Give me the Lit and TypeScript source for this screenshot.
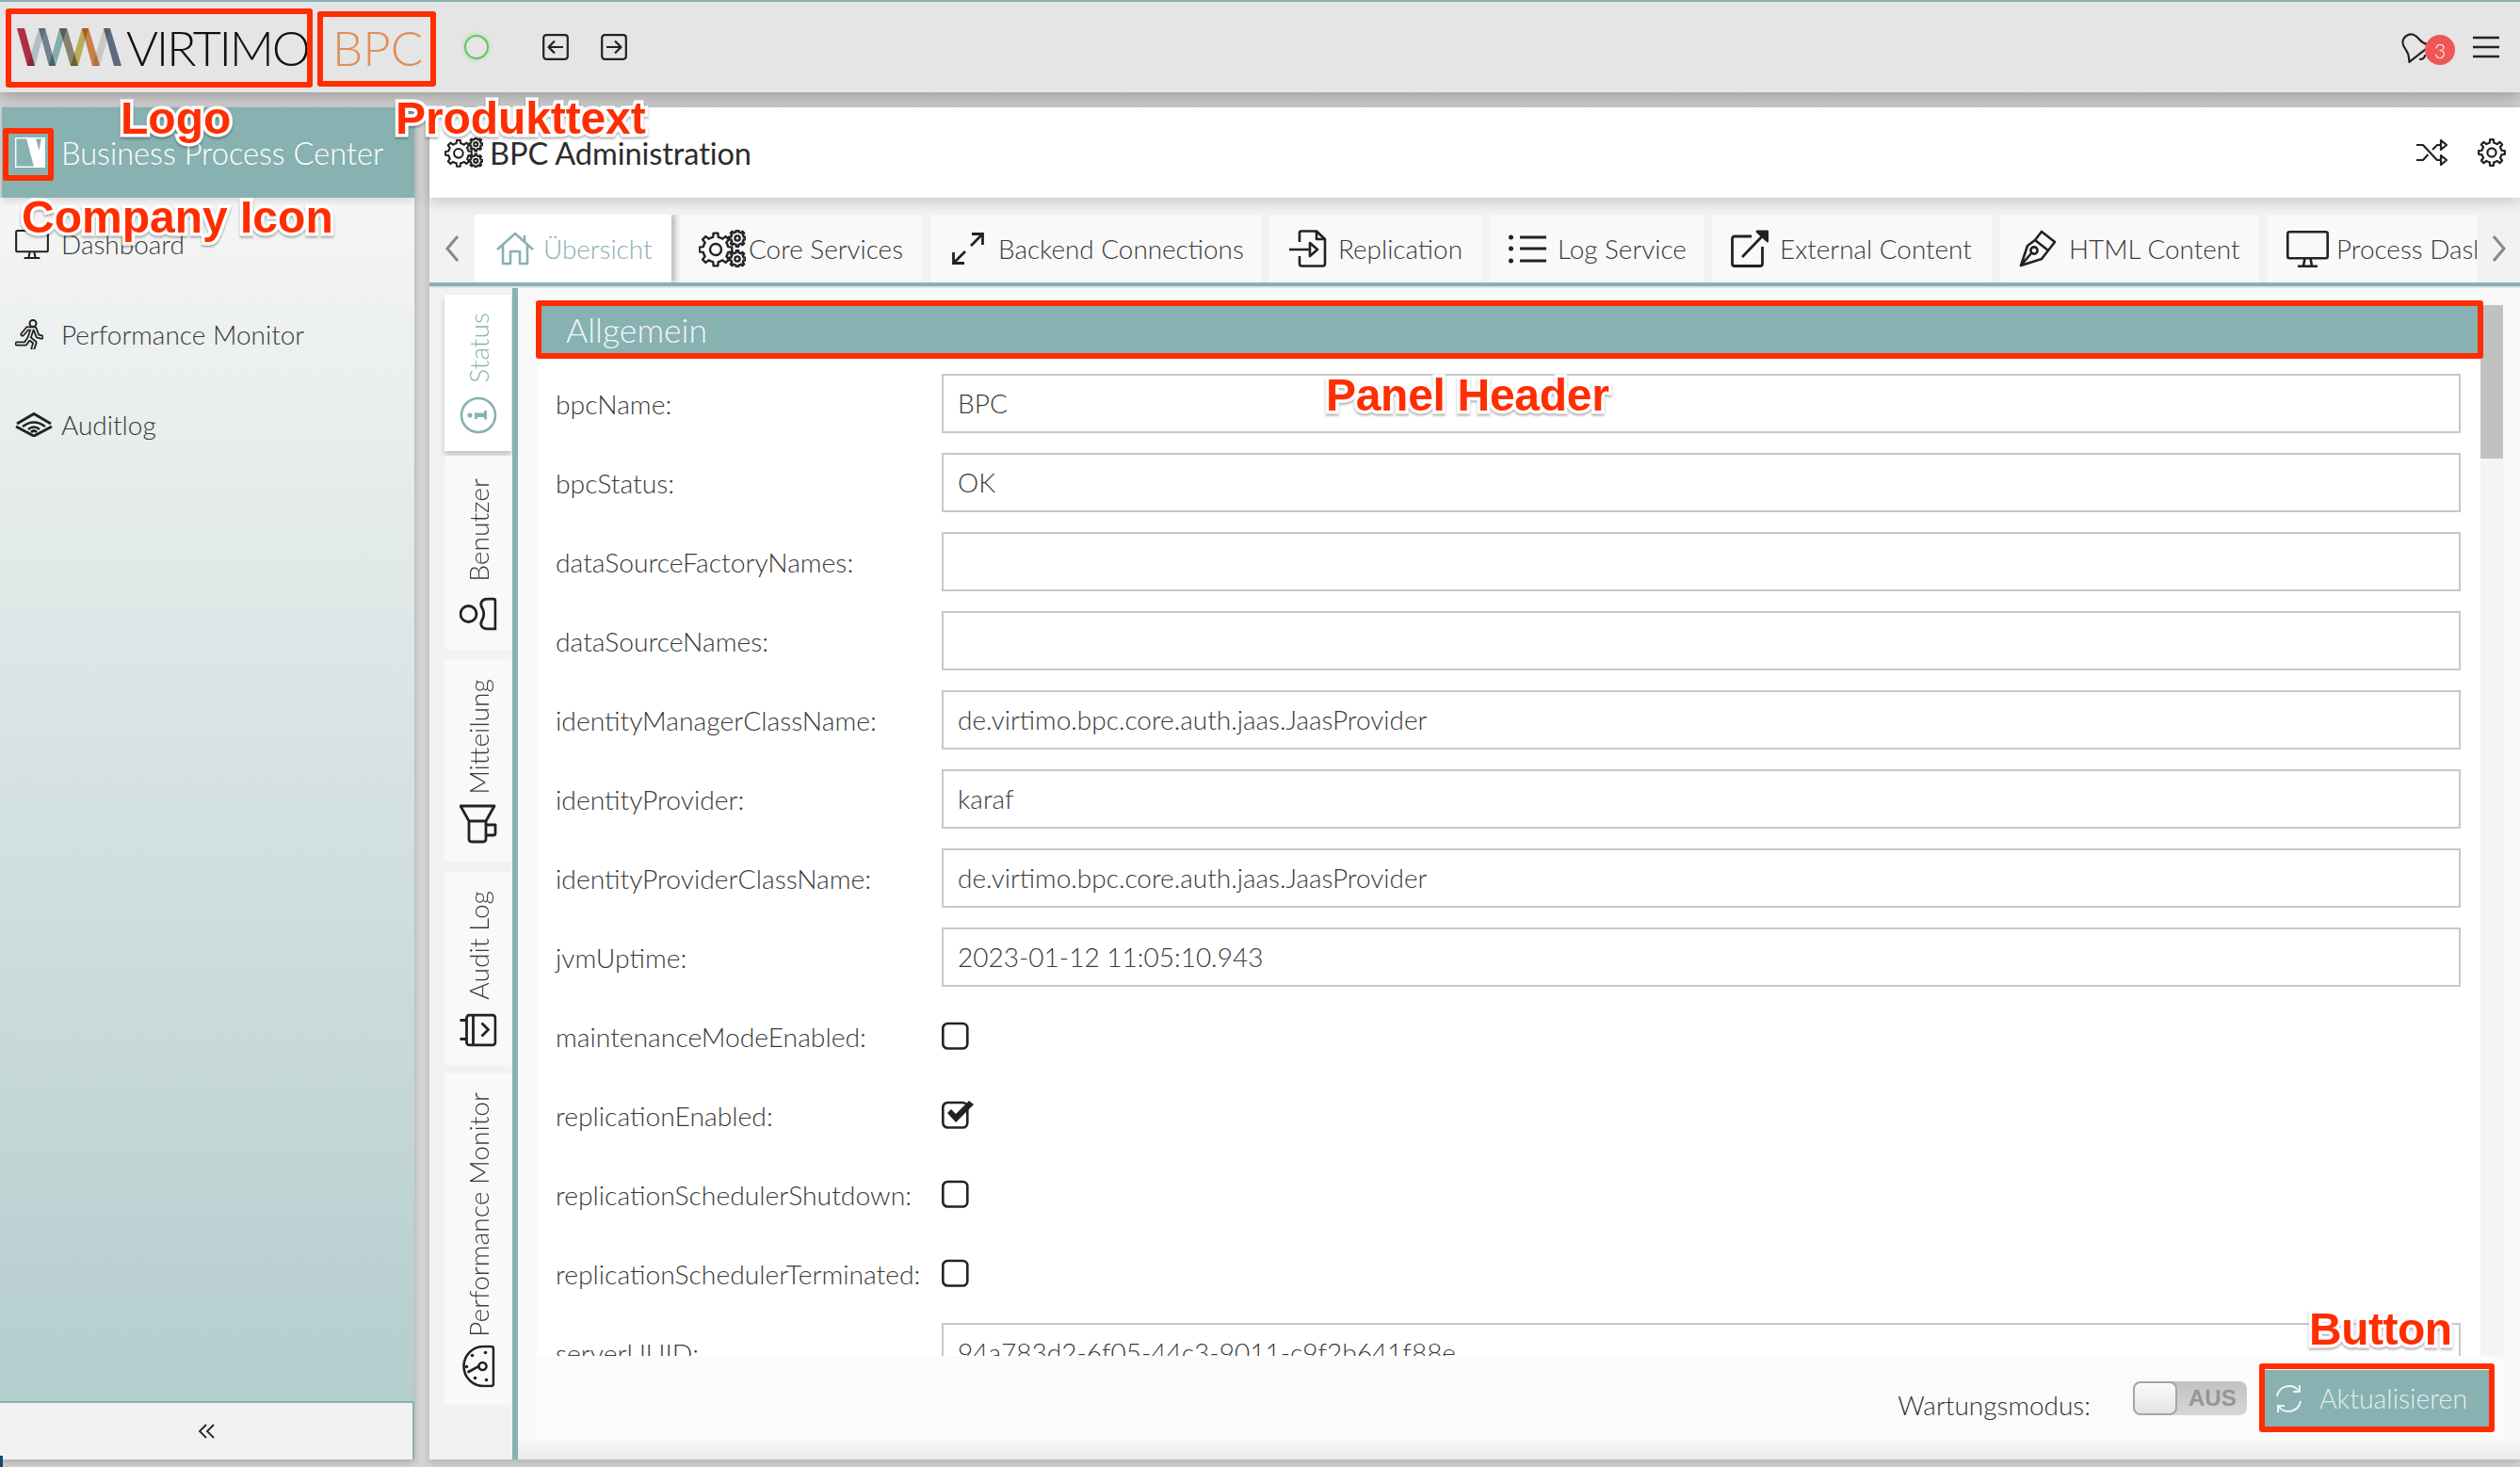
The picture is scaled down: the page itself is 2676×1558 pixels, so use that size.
import { LitElement, html, css, svg } from "lit";
import { customElement } from "lit/decorators.js";

const gearD = (cx: number, cy: number, ro: number, ri: number, n: number) => {
  let d = "";
  const step = (Math.PI * 2) / n;
  for (let i = 0; i < n; i++) {
    const a = i * step;
    const pts = [
      [ri, a - step * 0.5],
      [ri, a - step * 0.27],
      [ro, a - step * 0.17],
      [ro, a + step * 0.17],
      [ri, a + step * 0.27],
    ];
    pts.forEach(([r, t], j) => {
      d += `${i === 0 && j === 0 ? "M" : "L"}${(cx + r * Math.cos(t)).toFixed(2)} ${(cy + r * Math.sin(t)).toFixed(2)} `;
    });
  }
  return d + "Z";
};

const triGears = (w: number, h: number, sw: number) => html`<svg class="ic" width=${w} height=${h} viewBox="0 0 50 40" fill="none" stroke="#222" stroke-width=${sw} stroke-linejoin="round">
  <path d=${gearD(18, 21, 17.5, 13.5, 8)} /><circle cx="18" cy="21" r="6" />
  <path d=${gearD(41, 9, 9, 6.8, 8)} /><circle cx="41" cy="9" r="2.6" />
  <path d=${gearD(41, 31, 9, 6.8, 8)} /><circle cx="41" cy="31" r="2.6" />
</svg>`;

const monitor = (w: number, h: number) => html`<svg class="ic" width=${w} height=${h} viewBox="0 0 45 39" fill="none" stroke="#222" stroke-width="2.6" stroke-linejoin="round">
  <rect x="1.3" y="1.3" width="42.4" height="28" rx="2" />
  <path d="M19.5 29.5 L18 37.5 M25.5 29.5 L27 37.5 M12 37.7 H33" />
</svg>`;

const tabIcons: Record<string, unknown> = {
  home: html`<svg class="ic" width="40" height="36" viewBox="0 0 40 36" fill="none" stroke="#88b1b2" stroke-width="2.6" stroke-linejoin="round">
    <path d="M1 19 L20 2 L39 19 M7 14 V34 H15 V21 H25 V34 H33 V14 M30 4 V10" /></svg>`,
  core: triGears(50, 40, 2.4),
  backend: html`<svg class="ic" width="36" height="36" viewBox="0 0 36 36" fill="none" stroke="#222" stroke-width="2.8">
    <path d="M3 33 L15 21 M21 15 L33 3 M22 2.5 H33.5 V14 M2.5 22 V33.5 H14" /></svg>`,
  replication: html`<svg class="ic" width="40" height="40" viewBox="0 0 40 40" fill="none" stroke="#222" stroke-width="2.6" stroke-linejoin="round">
    <path d="M11 13 V3 Q11 1.5 13 1.5 H29 L38 10 V36 Q38 38.5 36 38.5 H13 Q11 38.5 11 36 V28 M29 1.5 V10 H38 M0 21 H22 M22 14 L30 21 L22 28 Z" /></svg>`,
  log: html`<svg class="ic" width="40" height="34" viewBox="0 0 40 34" fill="none" stroke="#222" stroke-width="2.8">
    <path d="M12 5 H40 M12 17 H40 M12 30 H40" /><g fill="#222" stroke="none"><circle cx="2.5" cy="5" r="2.5" /><circle cx="2.5" cy="17" r="2.5" /><circle cx="2.5" cy="30" r="2.5" /></g></svg>`,
  external: html`<svg class="ic" width="40" height="40" viewBox="0 0 40 40" fill="none" stroke="#222" stroke-width="2.8" stroke-linejoin="round">
    <path d="M22 7 H4 Q1.5 7 1.5 9.5 V36 Q1.5 38.5 4 38.5 H31 Q33.5 38.5 33.5 36 V18 M12 29 L37 3" /><path d="M28 2 H39 V12 Z" fill="#222" /></svg>`,
  html: html`<svg class="ic" width="40" height="40" viewBox="0 0 40 40" fill="none" stroke="#222" stroke-width="2.6" stroke-linejoin="round">
    <path d="M24 2 L38 13 L31 22 L17 11 Z M17 11 L9 17 L2 38 L24 31 L31 22 M2 38 L13 25" /><circle cx="16" cy="22" r="3.6" /></svg>`,
  process: monitor(45, 39),
};

const tabs = [
  { id: "home", label: "Übersicht", w: 209, pad: 23, gap: 10 },
  { id: "core", label: "Core Services", w: 257, pad: 20, gap: 3 },
  { id: "backend", label: "Backend Connections", w: 351, pad: 22, gap: 14 },
  { id: "replication", label: "Replication", w: 225, pad: 21, gap: 12 },
  { id: "log", label: "Log Service", w: 227, pad: 20, gap: 12 },
  { id: "external", label: "External Content", w: 297, pad: 20, gap: 12 },
  { id: "html", label: "HTML Content", w: 275, pad: 20, gap: 13 },
  { id: "process", label: "Process Dashboard", w: 222, pad: 20, gap: 8 },
];

const vIcons: Record<string, unknown> = {
  info: html`<svg width="40" height="40" viewBox="0 0 40 40" fill="none" stroke="#88b1b2" stroke-width="2.6">
    <circle cx="20" cy="20" r="18" /><g stroke="none" fill="#88b1b2"><circle cx="20" cy="11" r="2.6" /><path d="M16 16 H22.5 V26 H25 V29 H15.5 V26 H18 V19 H16 Z" /></g></svg>`,
  user: html`<svg width="35" height="40" viewBox="0 0 35 40" fill="none" stroke="#222" stroke-width="2.8">
    <circle cx="17.5" cy="10" r="8.5" /><path d="M1.5 38.5 V31 C1.5 24 6 22 10 24 C15 27 20 27 25 24 C29 22 33.5 24 33.5 31 V36 Q33.5 38.5 31 38.5 Z" /></svg>`,
  mega: html`<svg width="44" height="40" viewBox="0 0 44 40" fill="none" stroke="#222" stroke-width="2.8" stroke-linejoin="round">
    <g transform="rotate(90 22 20) translate(2 -1)"><path d="M1 2 H37 L28 18 V37 Q28 40 25 40 H13 Q10 40 10 37 V18 Z M10 18 H28 M28 22 H38 V31 Q38 33 36 33 H28" /></g></svg>`,
  term: html`<svg width="35" height="40" viewBox="0 0 35 40" fill="none" stroke="#222" stroke-width="2.8" stroke-linejoin="round">
    <rect x="1.5" y="8" width="32" height="30.5" rx="3" /><path d="M1.5 15 H33.5 M8 8 V1 M28 8 V1 M11 24 L18 31 L25 24" /></svg>`,
  gauge: html`<svg width="45" height="36" viewBox="0 0 45 36" fill="none" stroke="#222" stroke-width="2.6" stroke-linejoin="round">
    <path d="M4 34.5 Q1.5 34.5 1.5 32 V24 A21 21 0 0 1 43.5 24 V32 Q43.5 34.5 41 34.5 Z" /><circle cx="22.5" cy="23" r="4" /><path d="M22.5 19 L16 7" />
    <g fill="#222" stroke="none"><circle cx="8" cy="27" r="1.8" /><circle cx="10" cy="15" r="1.8" /><circle cx="34" cy="12" r="1.8" /><circle cx="37" cy="26" r="1.8" /><circle cx="22" cy="6" r="1.8" /></g></svg>`,
};

const vtabs = [
  { id: "info", label: "Status", h: 166, pt: 19, tg: 14, active: true, gap: 5 },
  { id: "user", label: "Benutzer", h: 206, pt: 24, tg: 14, active: false, gap: 10 },
  { id: "mega", label: "Mitteilung", h: 215, pt: 21, tg: 11, active: false, gap: 11 },
  { id: "term", label: "Audit Log", h: 205, pt: 20, tg: 12, active: false, gap: 9 },
  { id: "gauge", label: "Performance Monitor", h: 352, pt: 20, tg: 13, active: false, gap: 0 },
];

const rows: [string, string | boolean][] = [
  ["bpcName", "BPC"],
  ["bpcStatus", "OK"],
  ["dataSourceFactoryNames", ""],
  ["dataSourceNames", ""],
  ["identityManagerClassName", "de.virtimo.bpc.core.auth.jaas.JaasProvider"],
  ["identityProvider", "karaf"],
  ["identityProviderClassName", "de.virtimo.bpc.core.auth.jaas.JaasProvider"],
  ["jvmUptime", "2023-01-12 11:05:10.943"],
  ["maintenanceModeEnabled", false],
  ["replicationEnabled", true],
  ["replicationSchedulerShutdown", false],
  ["replicationSchedulerTerminated", false],
  ["serverUUID", "94a783d2-6f05-44c3-9011-c9f2b641f88e"],
];

const bands: [string, string][] = [
  ["18,30 26,30 37,70 29,70", "#c3334c"],
  ["41,30 48,30 37,70 29,70", "#c4d6d8"],
  ["41,30 48,30 59,70 52,70", "#7f8ea0"],
  ["63,30 71,30 59,70 52,70", "#94c0c2"],
  ["63,30 71,30 83,70 75,70", "#97917a"],
  ["87,30 94,30 83,70 75,70", "#cfc06a"],
  ["87,30 94,30 106,70 98,70", "#e18c52"],
  ["110,30 117,30 106,70 98,70", "#e2dfd6"],
  ["110,30 117,30 129,70 121,70", "#66788e"],
];

const runner = "M13 10 L21 10 L24 18 L28 19 M13 10 L8 16 M18 11 L15 20 L21 25 L19 31 M15 20 L11 26 H2";

@customElement("app-root")
export class AppRoot extends LitElement {
  static styles = css`
    :host {
      display: block;
      width: 2676px;
      height: 1558px;
      overflow: hidden;
      position: relative;
      font-family: Lato, "Noto Sans", sans-serif;
      font-weight: 300;
      color: #2b2b2b;
      background: #d4d4d4;
    }
    * { box-sizing: border-box; }
    svg { display: block; flex: none; }
    .app { display: flex; flex-direction: column; height: 100%; }

    .topbar {
      height: 98px;
      flex: none;
      display: flex;
      align-items: center;
      background: #e5e5e5;
      border-top: 2px solid #88b1b2;
      box-shadow: 0 4px 16px rgba(0, 0, 0, 0.28);
      position: relative;
      z-index: 3;
    }
    .logo-mark { width: 132px; height: 96px; flex: none; }
    .logo-mark polygon { mix-blend-mode: multiply; }
    .virtimo { font-size: 52px; line-height: 1; color: #111; margin-left: 2px; width: 220px; letter-spacing: -2.3px; white-space: nowrap; }
    .bpc { font-size: 51px; line-height: 1; color: #e08e58; width: 139px; margin-left: -1px; }
    .led { width: 26px; height: 26px; border-radius: 50%; border: 2px solid #5cc95c; box-shadow: 0 0 4px rgba(92, 201, 92, 0.5); flex: none; margin-left: 1px; }
    .nav { margin-left: 57px; }
    .nav + .nav { margin-left: 34px; }
    .spacer { flex: 1; }
    .bell { position: relative; width: 30px; height: 30px; margin-right: 46px; }
    .bell svg { margin: -2px 0 0 -3px; }
    .badge {
      position: absolute; left: 25px; top: 2px; width: 32px; height: 32px; border-radius: 50%;
      background: #ef5656; color: #fff; font-size: 21px; display: flex; align-items: center; justify-content: center;
    }
    .burger { margin-right: 22px; }

    .shell { flex: 1; min-height: 0; display: flex; gap: 16px; padding: 16px 0 8px; background: linear-gradient(#d0d0d0, #d4d4d4 30px); }

    .side { width: 440px; flex: none; display: flex; flex-direction: column; box-shadow: 0 4px 8px rgba(0, 0, 0, 0.18); }
    .side-head {
      height: 96px; flex: none; margin-left: 2px; background: #88b1b2; color: #fff; display: flex; align-items: center;
      padding-left: 14px; gap: 17px; font-size: 32.6px; box-shadow: 0 3px 8px rgba(0, 0, 0, 0.12); position: relative; z-index: 1;
    }
    .side-body { flex: 1; background: linear-gradient(#f5f5f5, #b4cdcd); padding: 1px 0 0 16px; display: flex; flex-direction: column; }
    .side-item { height: 96px; display: flex; align-items: center; font-size: 28px; color: #3a3a3a; }
    .side-ic { width: 49px; flex: none; display: flex; align-items: center; }
    .side-foot {
      height: 62px; flex: none; background: #f1f1f1; border-top: 2px solid #88b1b2; border-right: 2px solid #88b1b2;
      display: flex; align-items: center; justify-content: center;
    }

    .main { flex: 1; min-width: 0; display: flex; flex-direction: column; background: #f2f2f2; box-shadow: 0 4px 8px rgba(0, 0, 0, 0.15); }
    .main-head {
      height: 96px; flex: none; background: #fff; display: flex; align-items: center; padding: 0 15px 0 16px;
      box-shadow: 0 4px 14px rgba(0, 0, 0, 0.18); position: relative; z-index: 2;
    }
    .title { font-size: 32.6px; font-weight: 400; margin-left: 7px; color: #2c2c2c; flex: 1; letter-spacing: -0.1px; }
    .head-gear { margin-left: 32px; }

    .tabbar { height: 96px; flex: none; display: flex; padding: 18px 0 0 16px; position: relative; }
    .arrow { width: 16px; height: 28px; flex: none; margin-top: 22px; }
    .tabs { width: 2126px; margin-left: 16px; display: flex; gap: 9px; overflow: hidden; flex: none; height: 78px; }
    .tab {
      flex: none; height: 72px; background: #f9f9f9; display: flex; align-items: center; font-size: 27.9px; color: #3a3a3a;
      overflow: hidden; white-space: nowrap;
    }
    .tab.active { background: #fff; color: #88b1b2; box-shadow: 4px 0 5px rgba(0, 0, 0, 0.22); position: relative; }
    .arrow.r { margin-left: 16px; }
    .rule { height: 6px; margin-top: -6px; flex: none; background: linear-gradient(#88b1b2 4px, #dbe7e7 4px); position: relative; z-index: 1; }

    .work { flex: 1; min-height: 0; display: flex; }
    .vtabs { width: 88px; flex: none; padding: 7px 0 0 16px; display: flex; flex-direction: column; background: #f2f2f2; }
    .vtab { width: 71px; flex: none; background: #f9f9f9; display: flex; flex-direction: column; align-items: center; color: #3a3a3a; font-size: 28.2px; }
    .vtab.active { background: #fff; color: #88b1b2; box-shadow: 0 4px 6px rgba(0, 0, 0, 0.2); }
    .vtext { writing-mode: vertical-rl; transform: rotate(180deg); line-height: 36px; white-space: nowrap; }
    .vicon { transform: rotate(-90deg); }
    .vline { width: 6px; flex: none; background: #88b1b2; }

    .content { flex: 1; min-width: 0; display: flex; flex-direction: column; background: #f8f8f8; padding: 18px 18px 0 20px; }
    .scroll-area { height: 1116px; flex: none; display: flex; overflow: hidden; }
    .panel { flex: 1; min-width: 0; background: #fff; overflow: hidden; }
    .panel-head {
      height: 50px; margin: 1px 3px 0 5px; background: #88b1b2; color: #f2f7f7; font-size: 35.6px; line-height: 52px; padding-left: 26px;
    }
    .rows { padding-top: 11px; }
    .row { height: 84px; display: grid; grid-template-columns: 410px 1613px; align-items: center; margin-left: 20px; font-size: 28.3px; color: #3a3a3a; }
    .row .lbl { white-space: nowrap; padding-top: 2px; }
    .field { height: 63px; border: 2px solid #c8c8c8; background: #fff; display: flex; align-items: center; padding-left: 15px; white-space: nowrap; font-size: 28px; }
    .track { width: 24px; flex: none; background: #f4f4f4; }
    .thumb { height: 163px; background: #c1c1c1; }

    .foot {
      height: 90px; flex: none; background: #fbfbfb; display: flex; align-items: center; justify-content: flex-end; padding-right: 15px;
      font-size: 28.5px; color: #333;
    }
    .foot-label { margin-right: 45px; margin-top: 14px; font-size: 28px; }
    .toggle {
      width: 121px; height: 36px; border-radius: 8px; background: linear-gradient(#c2c2c2, #d6d6d6); display: flex; align-items: center;
      font: bold 24px "Liberation Sans", Arial, sans-serif; color: #959595; margin-right: 19px;
    }
    .knob { width: 47px; height: 36px; border-radius: 8px; border: 2px solid #a6a6a6; background: linear-gradient(#fafafa, #e4e4e4); margin-right: 12px; flex: none; }
    .btn {
      width: 238px; height: 60px; background: #88b1b2; color: #e4eeee; display: flex; align-items: center; padding-left: 10px; gap: 17px; font-size: 28.5px; flex: none;
    }
    .foot-under { flex: 1; background: linear-gradient(#f7f7f7, #e9e9e9); margin: 0 -18px 0 -20px; }

    .corner { position: absolute; left: 0; bottom: 0; width: 3px; height: 12px; background: #17466b; z-index: 9; }
    .box { position: absolute; border: 6px solid #ff2d00; border-radius: 3px; z-index: 10; }
    .b-logo { left: 6px; top: 9px; width: 326px; height: 84px; }
    .b-bpc { left: 337px; top: 12px; width: 126px; height: 80px; }
    .b-co { left: 3px; top: 136px; width: 54px; height: 56px; }
    .b-panel { left: 569px; top: 319px; width: 2068px; height: 62px; }
    .b-btn { left: 2399px; top: 1448px; width: 250px; height: 73px; }
    .note {
      position: absolute; z-index: 11; font: bold 48px/48px "Liberation Sans", Arial, sans-serif; color: #ff2d00; white-space: nowrap;
      -webkit-text-stroke: 7px #fff; paint-order: stroke fill; filter: drop-shadow(0 2px 1px rgba(0, 0, 0, 0.3));
    }
    .n-logo { left: 128px; top: 102px; }
    .n-prod { left: 420px; top: 102px; letter-spacing: -0.1px; }
    .n-co { left: 23px; top: 207px; }
    .n-panel { left: 1408px; top: 396px; letter-spacing: -0.3px; }
    .n-btn { left: 2452px; top: 1388px; letter-spacing: -0.5px; }
  `;

  render() {
    return html`
      <div class="app">
        <header class="topbar">
          <svg class="logo-mark" viewBox="0 0 132 96">
            ${bands.map(([p, c]) => svg`<polygon points=${p} fill=${c} transform="translate(0 -2)" />`)}
          </svg>
          <div class="virtimo">VIRTIMO</div>
          <div class="bpc">BPC</div>
          <div class="led"></div>
          <svg class="nav" width="28" height="28" viewBox="0 0 28 28" fill="none" stroke="#222" stroke-width="2.2" stroke-linejoin="round">
            <rect x="1.2" y="1.2" width="25.6" height="25.6" rx="3" /><path d="M22 14 H6.5 M13 7.5 L6.5 14 L13 20.5" /></svg>
          <svg class="nav" width="28" height="28" viewBox="0 0 28 28" fill="none" stroke="#222" stroke-width="2.2" stroke-linejoin="round">
            <rect x="1.2" y="1.2" width="25.6" height="25.6" rx="3" /><path d="M6 14 H21.5 M15 7.5 L21.5 14 L15 20.5" /></svg>
          <div class="spacer"></div>
          <div class="bell">
            <svg width="34" height="34" viewBox="0 0 30 30" fill="none" stroke="#222" stroke-width="1.9" stroke-linejoin="round">
              <g transform="rotate(-38 15 15)"><path d="M15 2 C9 2 7 7 7 12 C7 18 4 20 2.5 23 H27.5 C26 20 23 18 23 12 C23 7 21 2 15 2 Z M12 26.5 C12.5 29 17.5 29 18 26.5" /></g></svg>
            <span class="badge">3</span>
          </div>
          <svg class="burger" width="28" height="24" viewBox="0 0 28 24" stroke="#222" stroke-width="2.6"><path d="M0 2 H28 M0 12 H28 M0 22 H28" /></svg>
        </header>

        <div class="shell">
          <aside class="side">
            <div class="side-head">
              <svg width="32" height="32" viewBox="0 0 32 32"><rect x="0.7" y="0.7" width="30.6" height="30.6" fill="none" stroke="#fff" stroke-width="1.4" /><path fill="#fff" d="M12 1 H22 L25.5 14 L28 1 H31 V31 H20 Z" /></svg>
              <span>Business Process Center</span>
            </div>
            <div class="side-body">
              <div class="side-item"><span class="side-ic">${monitor(36, 31)}</span>Dashboard</div>
              <div class="side-item"><span class="side-ic">
                <svg width="30" height="32" viewBox="0 0 30 32" fill="none" stroke-linejoin="round" stroke-linecap="round">
                  <circle cx="19" cy="4.5" r="3.5" stroke="#222" stroke-width="2" />
                  <path d=${runner} stroke="#222" stroke-width="5" />
                  <path d=${runner} stroke="#eff1f1" stroke-width="1.4" />
                </svg></span>Performance Monitor</div>
              <div class="side-item"><span class="side-ic">
                <svg width="40" height="26" viewBox="0 0 40 26" fill="none" stroke="#222" stroke-width="2.4"><path d="M1 15 L20 25 L39 15" stroke-width="3" /><path d="M8 15 Q20 6 32 15 M14 18 Q20 13 26 18" /><path d="M2 12 L20 1.5 L38 12" stroke-width="3" /><path d="M17 21 Q20 18 23 21" stroke-width="2.6" /></svg></span>Auditlog</div>
            </div>
            <div class="side-foot">
              <svg width="18" height="16" viewBox="0 0 18 16" fill="none" stroke="#222" stroke-width="1.8"><path d="M9 1 L2 8 L9 15 M17 1 L10 8 L17 15" /></svg>
            </div>
          </aside>

          <main class="main">
            <div class="main-head">
              ${triGears(41, 32, 2.6)}
              <div class="title">BPC Administration</div>
              <svg width="33" height="28" viewBox="0 0 33 28" fill="none" stroke="#222" stroke-width="2.2" stroke-linejoin="round">
                <path d="M0 6 H7 L22 22 H26 M0 22 H7 L12.5 16 M17 11 L22 6 H26 M26 1 L32 6 L26 11 Z M26 17 L32 22 L26 27 Z" /></svg>
              <svg class="head-gear" width="30" height="30" viewBox="0 0 30 30" fill="none" stroke="#222" stroke-width="2.2" stroke-linejoin="round">
                <path d=${gearD(15, 15, 14, 10.6, 8)} /><circle cx="15" cy="15" r="4.6" /></svg>
            </div>

            <div class="tabbar">
              <svg class="arrow" viewBox="0 0 16 28" fill="none" stroke="#888" stroke-width="3"><path d="M14 1 L3 14 L14 27" /></svg>
              <div class="tabs">
                ${tabs.map(
                  (t, i) => html`<div class="tab ${i === 0 ? "active" : ""}" style="width:${t.w}px;padding-left:${t.pad}px;gap:${t.gap}px">${tabIcons[t.id]}<span>${t.label}</span></div>`
                )}
              </div>
              <svg class="arrow r" viewBox="0 0 16 28" fill="none" stroke="#888" stroke-width="3"><path d="M2 1 L13 14 L2 27" /></svg>
            </div>
            <div class="rule"></div>

            <div class="work">
              <nav class="vtabs">
                ${vtabs.map(
                  (v) => html`<div class="vtab ${v.active ? "active" : ""}" style="height:${v.h}px;padding-top:${v.pt}px;margin-bottom:${v.gap}px;gap:${v.tg}px">
                    <span class="vtext">${v.label}</span><span class="vicon">${vIcons[v.id]}</span>
                  </div>`
                )}
              </nav>
              <div class="vline"></div>
              <div class="content">
                <div class="scroll-area">
                  <section class="panel">
                    <div class="panel-head">Allgemein</div>
                    <div class="rows">
                      ${rows.map(
                        ([k, v]) => html`<div class="row"><span class="lbl">${k}:</span>
                          ${typeof v === "string"
                            ? html`<div class="field">${v}</div>`
                            : html`<svg width="34" height="30" viewBox="0 0 34 30" fill="none" stroke="#222" stroke-width="2.6">
                                <rect x="1.3" y="2" width="26" height="26.5" rx="5" />
                                ${v ? svg`<path fill="#222" stroke="none" d="M6 13 L10 9 L15 14 L29 0 L34 4 L15 23 Z" />` : ""}
                              </svg>`}
                        </div>`
                      )}
                    </div>
                  </section>
                  <div class="track"><div class="thumb"></div></div>
                </div>
                <div class="foot">
                  <span class="foot-label">Wartungsmodus:</span>
                  <div class="toggle"><div class="knob"></div>AUS</div>
                  <div class="btn">
                    <svg width="31" height="31" viewBox="0 0 31 31" fill="none" stroke="#eef4f4" stroke-width="2"><path d="M3 13 A13 13 0 0 1 26 7 M28 18 A13 13 0 0 1 5 24 M27 1 V8 H20 M4 30 V23 H11" /></svg>
                    Aktualisieren
                  </div>
                </div>
                <div class="foot-under"></div>
              </div>
            </div>
          </main>
        </div>
      </div>

      <div class="corner"></div>
      <div class="box b-logo"></div>
      <div class="box b-bpc"></div>
      <div class="box b-co"></div>
      <div class="box b-panel"></div>
      <div class="box b-btn"></div>
      <div class="note n-logo">Logo</div>
      <div class="note n-prod">Produkttext</div>
      <div class="note n-co">Company Icon</div>
      <div class="note n-panel">Panel Header</div>
      <div class="note n-btn">Button</div>
    `;
  }
}
